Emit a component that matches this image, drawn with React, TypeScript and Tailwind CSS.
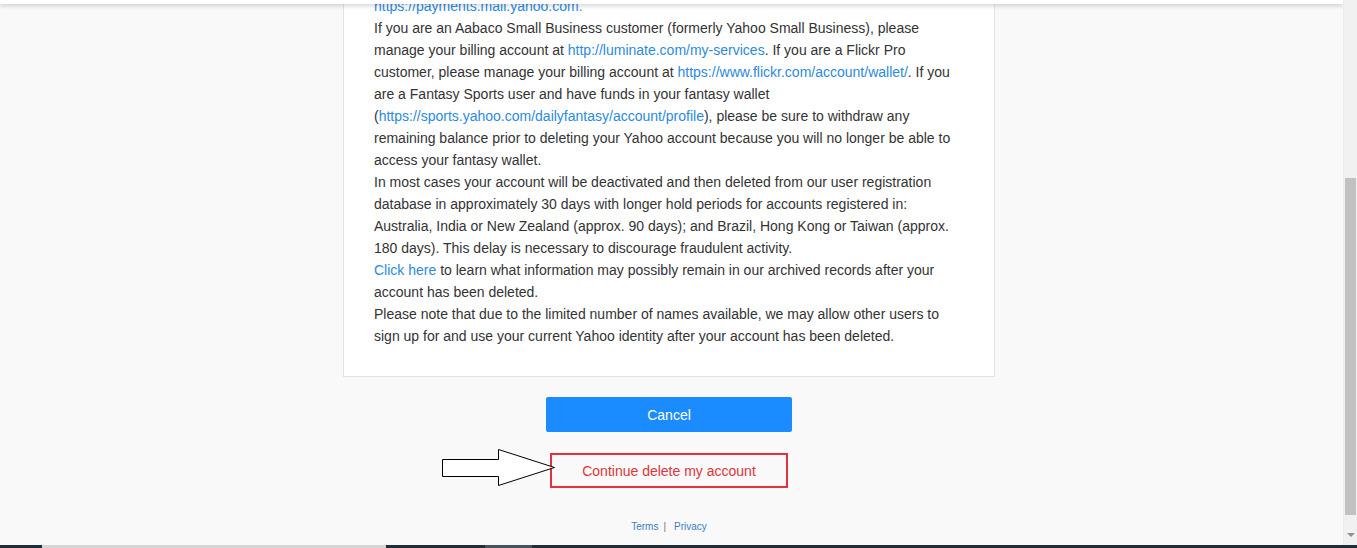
import React from "react";

const link = "text-[#2b8ae0]";

function Arrow() {
  return (
    <svg
      className="absolute left-[-108px] top-[-4px]"
      width="116"
      height="40"
      viewBox="0 0 116 40"
    >
      <polygon
        points="0.5,10.5 56.5,10.5 56.5,0.5 112.5,18.5 56.5,36.5 56.5,27.5 0.5,27.5"
        fill="white"
        stroke="black"
        strokeWidth="1"
      />
    </svg>
  );
}

export default function App() {
  return (
    <div className="w-[1357px] h-[548px] flex flex-col bg-[#f9f9f9] font-['Liberation_Sans',Arial,sans-serif] overflow-hidden">
      <div className="flex flex-1 min-h-0">
        {/* Page */}
        <div className="relative flex-1 overflow-hidden">
          <div className="absolute top-0 left-0 right-0 h-[4px] bg-white shadow-[0_2px_4px_rgba(0,0,0,0.18)] z-10" />

          <div className="ml-[343px] w-[652px] flex flex-col items-center">
            {/* Card */}
            <div className="w-full -mt-[26px] bg-white border border-[#e3e3e3] pt-[20px] pb-[29px] pl-[30px] text-[14px] leading-[22px] text-[#333] whitespace-nowrap">
              <div>
                <span className={link}>https://payments.mail.yahoo.com.</span>
              </div>
              <div>
                If you are an Aabaco Small Business customer (formerly Yahoo Small Business), please
                <br />
                manage your billing account at <span className={link}>http://luminate.com/my-services</span>. If you are a Flickr Pro
                <br />
                customer, please manage your billing account at <span className={link}>https://www.flickr.com/account/wallet/</span>. If you
                <br />
                are a Fantasy Sports user and have funds in your fantasy wallet
                <br />
                (<span className={link}>https://sports.yahoo.com/dailyfantasy/account/profile</span>), please be sure to withdraw any
                <br />
                remaining balance prior to deleting your Yahoo account because you will no longer be able to
                <br />
                access your fantasy wallet.
              </div>
              <div>
                In most cases your account will be deactivated and then deleted from our user registration
                <br />
                database in approximately 30 days with longer hold periods for accounts registered in:
                <br />
                Australia, India or New Zealand (approx. 90 days); and Brazil, Hong Kong or Taiwan (approx.
                <br />
                180 days). This delay is necessary to discourage fraudulent activity.
              </div>
              <div>
                <span className={link}>Click here</span> to learn what information may possibly remain in our archived records after your
                <br />
                account has been deleted.
              </div>
              <div>
                Please note that due to the limited number of names available, we may allow other users to
                <br />
                sign up for and use your current Yahoo identity after your account has been deleted.
              </div>
            </div>

            {/* Buttons */}
            <button className="mt-[20px] w-[246px] h-[35px] rounded-[2px] bg-[#1a8cff] text-white text-[14px] flex items-center justify-center pt-[1px]">
              Cancel
            </button>
            <div className="relative mt-[21px]">
              <button className="w-[238px] h-[35px] border-2 border-[#e0343a] text-[#e0343a] text-[14px] flex items-center justify-center pt-[1px]">
                Continue delete my account
              </button>
              <Arrow />
            </div>

            {/* Footer */}
            <div className="mt-[33px] flex items-center gap-[5px] text-[10px] leading-[12px]">
              <span className="text-[#3d7cc4]">Terms</span>
              <span className="text-[#777]">|</span>
              <span className="text-[#3d7cc4] ml-[3px]">Privacy</span>
            </div>
          </div>
        </div>

        {/* Scrollbar */}
        <div className="w-[14px] bg-[#f1f1f1] flex flex-col items-center border-l border-[#ececec]">
          <div className="h-[178px]" />
          <div className="w-[11px] h-[337px] bg-[#c1c1c1]" />
          <div className="flex-1 flex items-end pb-[8px]">
            <div className="w-0 h-0 border-l-[4px] border-r-[4px] border-t-[4px] border-l-transparent border-r-transparent border-t-[#909090]" />
          </div>
        </div>
      </div>

      {/* Taskbar edge */}
      <div className="h-[3px] flex bg-[#1f2d37]">
        <div className="w-[42px]" />
        <div className="w-[344px] bg-[#d6d6d6]" />
        <div className="w-[99px]" />
        <div className="w-[47px] bg-[#46535d]" />
      </div>
    </div>
  );
}
